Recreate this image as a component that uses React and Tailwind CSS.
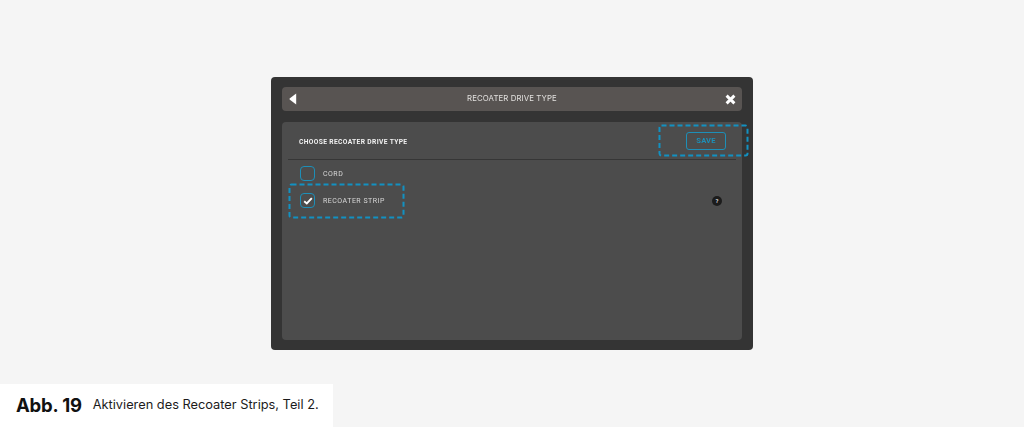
export default function App() {
  return (
    <div className="w-[1024px] h-[427px] bg-[#f5f5f5] flex flex-col overflow-hidden font-['Inter',sans-serif]">
      <div className="relative ml-[271px] mt-[77px] w-[482px] h-[273px] bg-[#343434] rounded-[4px] p-[10px] pb-[10px] flex flex-col gap-[11px]">
        <div className="h-[24px] mx-px bg-[#585452] rounded-[4px] flex items-center justify-between pl-[7px] pr-[6px] relative">
          <svg width="8" height="12" viewBox="0 0 8 12"><path d="M7.2 0.6V11.4L0.6 6.6V5.4Z" fill="#fff" /></svg>
          <span className="absolute inset-0 flex items-center justify-center text-[7.8px] text-[#e2e0de] tracking-[0.1px] blur-[0.3px]">RECOATER DRIVE TYPE</span>
          <svg width="11" height="11" viewBox="0 0 11 11"><path d="M1.6 1.6L9.4 9.4M9.4 1.6L1.6 9.4" stroke="#fff" strokeWidth="2.9" /></svg>
        </div>
        <div className="flex-1 mx-px bg-[#4c4c4c] rounded-[4px] flex flex-col px-[6px]">
          <div className="h-[38px] shrink-0 border-b border-[#363636] flex items-center justify-between pl-[11px] pr-[10px] pt-[1px]">
            <span className="text-[6.7px] font-bold text-[#f0f0f0] tracking-[0.35px] font-['Roboto',sans-serif] pt-[3px] blur-[0.3px]">CHOOSE RECOATER DRIVE TYPE</span>
            <span className="w-[40px] h-[18px] border-[1.5px] border-[#1d8fb8] rounded-[3px] flex items-center justify-center text-[7.5px] font-bold text-[#1d8fb8] tracking-[0.2px] font-['Roboto',sans-serif] blur-[0.2px]">SAVE</span>
          </div>
          <div className="flex flex-col gap-[12px] pt-[6px] pl-[12px] pr-[14px]">
            <div className="h-[15px] flex items-center gap-[8px]">
              <span className="w-[15px] h-[15px] border-[1.5px] border-[#1d8fb8] rounded-[4px]" />
              <span className="text-[7px] text-[#d8d8d8] tracking-[0.5px] font-['Roboto',sans-serif] pt-[2px] blur-[0.3px]">CORD</span>
            </div>
            <div className="h-[15px] flex items-center gap-[8px]">
              <span className="w-[15px] h-[15px] border-[1.5px] border-[#1d8fb8] rounded-[4px] flex items-center justify-center">
                <svg width="10" height="8" viewBox="0 0 10 8"><path d="M1.2 4.2L3.8 6.4L8.8 1.2" fill="none" stroke="#fff" strokeWidth="1.9" /></svg>
              </span>
              <span className="text-[7px] text-[#d8d8d8] tracking-[0.5px] font-['Roboto',sans-serif] pt-[2px] blur-[0.3px]">RECOATER STRIP</span>
              <span className="ml-auto w-[10px] h-[10px] rounded-full bg-[#1c1c1c] flex items-center justify-center text-[6px] font-bold text-[#dddddd] font-['Roboto',sans-serif]">?</span>
            </div>
          </div>
        </div>
        <svg className="absolute left-[17px] top-[106px]" width="117" height="36" viewBox="0 0 117 36" fill="none">
          <rect x="1.5" y="1.5" width="114" height="33" rx="2" stroke="#1291c2" strokeWidth="2" strokeDasharray="5 3" />
        </svg>
        <svg className="absolute left-[387px] top-[47px]" width="91" height="33" viewBox="0 0 91 33" fill="none">
          <rect x="1.5" y="1.5" width="88" height="30" rx="2" stroke="#1291c2" strokeWidth="2" strokeDasharray="5 3" />
        </svg>
      </div>
      <div className="mt-[34px] w-[333px] h-[43px] bg-white flex items-center pl-[16px] gap-[11px] text-[#111111]">
        <span className="text-[18.5px] font-bold leading-none tracking-[-0.2px]">Abb. 19</span>
        <span className="text-[12.8px] leading-none text-[#1b1b1b]">Aktivieren des Recoater Strips, Teil 2.</span>
      </div>
    </div>
  );
}
